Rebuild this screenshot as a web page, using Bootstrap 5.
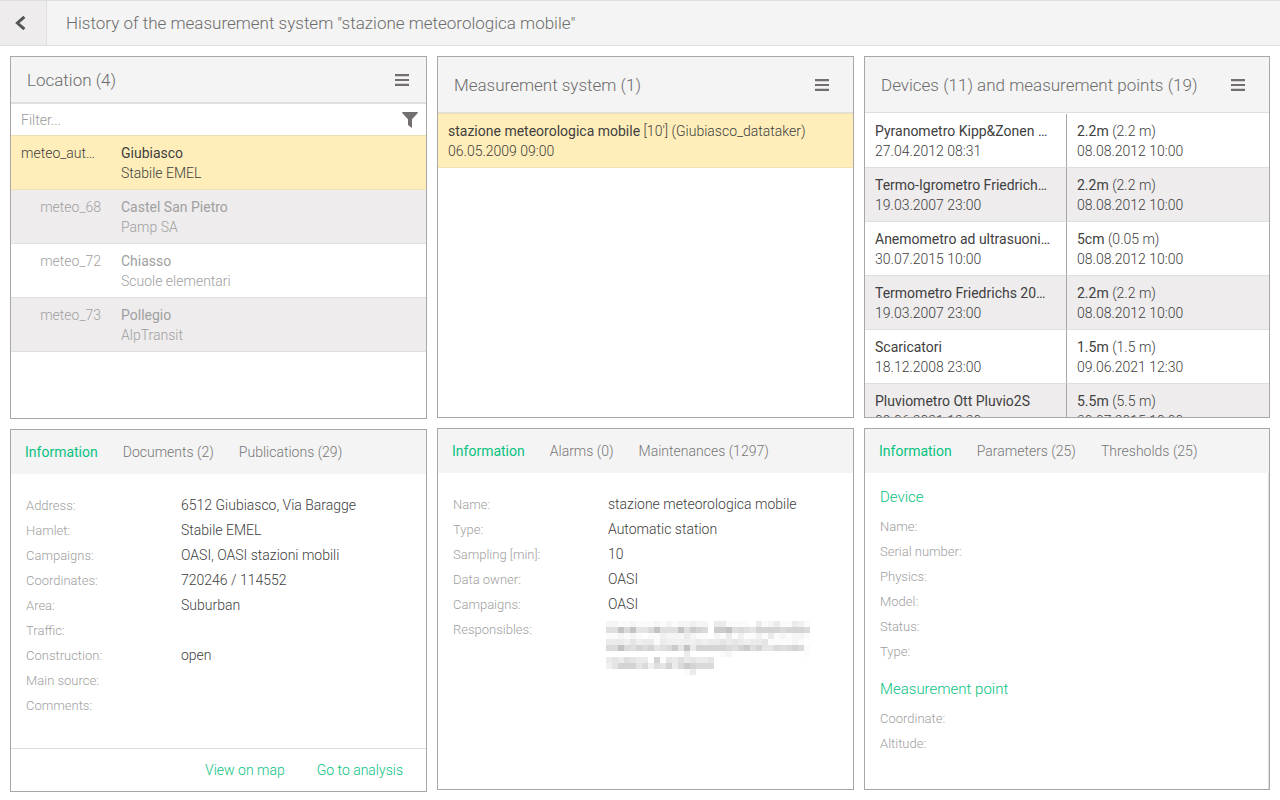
<!DOCTYPE html>
<html lang="en">
<head>
<meta charset="utf-8">
<meta name="viewport" content="width=device-width, initial-scale=1">
<title>History of the measurement system</title>
<link href="https://cdn.jsdelivr.net/npm/bootstrap@5.3.0/dist/css/bootstrap.min.css" rel="stylesheet">
<style>
  :root { --edge: #a9a6a7; --line: #dfdfdf; --bar: #f4f4f4; --stripe: #eeeced; --accent: #08c27f; --ink: #404040; --icon: #736e70; }
  body { font-family: Roboto, "Liberation Sans", sans-serif; font-weight: 300; font-size: 14px; line-height: 20px; color: var(--ink); background: #fff; }
  button, input { font-weight: inherit; }
  .app { height: 100vh; min-height: 640px; }
  .topbar { background: var(--bar); border-block: 1px solid var(--line); height: 46px; }
  .back { width: 47px; border: 0; border-right: 1px solid var(--line); background: var(--stripe); padding: 0 6px 0 0; }
  .title, .panel-head h2 { font-size: 17px; line-height: 24px; font-weight: 300; color: #6c6c6c; margin: 0; }
  .title { padding-left: 19px; }
  .board { display: grid; grid-template-columns: 417fr 417fr 406fr; gap: 10px; padding: 10px 10px 8px; }
  .stack { display: flex; flex-direction: column; gap: 10px; min-height: 0; min-width: 0; }
  .stack + .stack { padding-bottom: 2px; }
  .panel { flex: 1 1 0; min-height: 0; border: 1px solid var(--edge); display: flex; flex-direction: column; overflow: hidden; }
  .panel-head { flex: none; background: var(--bar); border-bottom: 1px solid var(--line); height: 56px; padding: 0 24px 0 16px; }
  .panel-head.compact { height: 46px; padding-right: 17px; }
  .icon-btn { border: 0; background: none; padding: 0; display: flex; color: var(--icon); }
  .filter-row { flex: none; height: 32px; border-top: 1px solid var(--line); padding: 0 8px 0 10px; }
  .filter-row input { border: 0; outline: 0; padding: 0; min-width: 0; background: none; }
  .filter-row input::placeholder { color: #999; opacity: 1; }
  .rows { width: 100%; table-layout: fixed; border-collapse: separate; border-spacing: 0; }
  .rows td { height: 54px; padding: 7px 10px 6px; border-bottom: 1px solid var(--line); vertical-align: top; }
  .rows tr:nth-child(even) td { background: var(--stripe); }
  .rows tr.chosen td { background: #ffeeba; border-bottom-color: #f0e2b4; }
  .first-line { border-top: 1px solid #eee0b4; }
  .first-plain { padding-top: 1px; }
  .rows strong { font-weight: 400; }
  .code-col { width: 100px; }
  .muted-row { color: #a0a0a0; }
  .split td:first-child { border-right: 1px solid var(--edge); }
  .tabs { flex: none; height: 44px; background: var(--bar); padding: 0 14px; gap: 25px; }
  .tabs button { border: 0; background: none; padding: 0; color: #777; }
  .tabs button.active { color: var(--accent); font-weight: 400; }
  .details { display: grid; grid-template-columns: 155px 1fr; margin: 0; }
  .details dt { font-weight: 300; font-size: 13px; line-height: 25px; color: #a0a0a0; }
  .details dd { margin: 0; line-height: 25px; min-height: 25px; }
  .info { flex: 1; padding: 19px 15px 0; }
  .info.sections { padding-top: 14px; border-right: 1px solid var(--line); }
  .info h3 { font-size: 15px; line-height: 20px; font-weight: 300; color: var(--accent); margin: 0 0 7px; }
  .details + h3 { margin-top: 15px; }
  .redacted { display: block; overflow: visible; margin-top: 4px; }
  .panel-foot { flex: none; border-top: 1px solid var(--line); height: 43px; padding: 0 23px; gap: 32px; }
  .panel-foot a { color: var(--accent); text-decoration: none; }
</style>
</head>
<body>
<div class="app d-flex flex-column">
  <header class="topbar d-flex flex-shrink-0">
    <button class="back d-flex align-items-center justify-content-center" type="button" aria-label="Back">
      <svg width="12" height="16" viewBox="0 0 12 16" fill="none" stroke="#555" stroke-width="3"><path d="M10.4 1.8 3.4 8l7 6.2"/></svg>
    </button>
    <h1 class="title align-self-center">History of the measurement system "stazione meteorologica mobile"</h1>
  </header>

  <main class="board flex-grow-1">
    <div class="stack">
      <section class="panel">
        <div class="panel-head compact d-flex align-items-center justify-content-between">
          <h2>Location (4)</h2>
          <button class="icon-btn" type="button" aria-label="Location menu"><svg width="14" height="12" fill="currentColor"><path d="M0 0h14v2.2H0zM0 4.9h14v2.2H0zM0 9.8h14V12H0z"/></svg></button>
        </div>
        <div class="filter-row d-flex align-items-center">
          <input class="flex-grow-1" type="text" placeholder="Filter..." aria-label="Filter locations">
          <button class="icon-btn" type="button" aria-label="Apply filter"><svg width="16" height="16" fill="currentColor"><path d="M.8 0h14.4q1.2.2.4 1.2L10 7.2V16L6 13V7.2L.4 1.2Q-.4.2.8 0z"/></svg></button>
        </div>
        <table class="rows first-line" aria-label="Locations">
          <colgroup><col class="code-col"><col></colgroup>
          <tbody>
            <tr class="chosen"><td>meteo_aut…</td><td><strong>Giubiasco</strong><br>Stabile EMEL</td></tr>
            <tr class="muted-row"><td class="text-end">meteo_68</td><td><strong>Castel San Pietro</strong><br>Pamp SA</td></tr>
            <tr class="muted-row"><td class="text-end">meteo_72</td><td><strong>Chiasso</strong><br>Scuole elementari</td></tr>
            <tr class="muted-row"><td class="text-end">meteo_73</td><td><strong>Pollegio</strong><br>AlpTransit</td></tr>
          </tbody>
        </table>
      </section>
      <section class="panel">
        <div class="tabs d-flex align-items-center" role="tablist">
          <button class="active" type="button" role="tab" aria-selected="true">Information</button>
          <button type="button" role="tab">Documents (2)</button>
          <button type="button" role="tab">Publications (29)</button>
        </div>
        <div class="info">
          <dl class="details">
            <dt>Address:</dt><dd>6512 Giubiasco, Via Baragge</dd>
            <dt>Hamlet:</dt><dd>Stabile EMEL</dd>
            <dt>Campaigns:</dt><dd>OASI, OASI stazioni mobili</dd>
            <dt>Coordinates:</dt><dd>720246 / 114552</dd>
            <dt>Area:</dt><dd>Suburban</dd>
            <dt>Traffic:</dt><dd></dd>
            <dt>Construction:</dt><dd>open</dd>
            <dt>Main source:</dt><dd></dd>
            <dt>Comments:</dt><dd></dd>
          </dl>
        </div>
        <div class="panel-foot d-flex align-items-center justify-content-end">
          <a href="#map">View on map</a>
          <a href="#analysis">Go to analysis</a>
        </div>
      </section>
    </div>

    <div class="stack">
      <section class="panel">
        <div class="panel-head d-flex align-items-center justify-content-between">
          <h2>Measurement system (1)</h2>
          <button class="icon-btn" type="button" aria-label="Measurement system menu"><svg width="14" height="12" fill="currentColor"><path d="M0 0h14v2.2H0zM0 4.9h14v2.2H0zM0 9.8h14V12H0z"/></svg></button>
        </div>
        <table class="rows first-line" aria-label="Measurement systems">
          <tbody>
            <tr class="chosen"><td><strong>stazione meteorologica mobile</strong> [10'] (Giubiasco_datataker)<br>06.05.2009 09:00</td></tr>
          </tbody>
        </table>
      </section>
      <section class="panel">
        <div class="tabs d-flex align-items-center" role="tablist">
          <button class="active" type="button" role="tab" aria-selected="true">Information</button>
          <button type="button" role="tab">Alarms (0)</button>
          <button type="button" role="tab">Maintenances (1297)</button>
        </div>
        <div class="info">
          <dl class="details">
            <dt>Name:</dt><dd>stazione meteorologica mobile</dd>
            <dt>Type:</dt><dd>Automatic station</dd>
            <dt>Sampling [min]:</dt><dd>10</dd>
            <dt>Data owner:</dt><dd>OASI</dd>
            <dt>Campaigns:</dt><dd>OASI</dd>
            <dt>Responsibles:</dt>
            <dd><svg class="redacted" id="redacted" width="202" height="54" viewBox="2 0 202 54" shape-rendering="crispEdges" role="img" aria-label="Redacted names"></svg></dd>
          </dl>
        </div>
      </section>
    </div>

    <div class="stack">
      <section class="panel">
        <div class="panel-head d-flex align-items-center justify-content-between">
          <h2>Devices (11) and measurement points (19)</h2>
          <button class="icon-btn" type="button" aria-label="Devices menu"><svg width="14" height="12" fill="currentColor"><path d="M0 0h14v2.2H0zM0 4.9h14v2.2H0zM0 9.8h14V12H0z"/></svg></button>
        </div>
        <div class="first-plain">
        <table class="rows split" aria-label="Devices and measurement points">
          <tbody>
            <tr><td><div class="text-truncate"><strong>Pyranometro Kipp&amp;Zonen …</strong></div>27.04.2012 08:31</td><td><strong>2.2m</strong> (2.2 m)<br>08.08.2012 10:00</td></tr>
            <tr><td><div class="text-truncate"><strong>Termo-Igrometro Friedrich…</strong></div>19.03.2007 23:00</td><td><strong>2.2m</strong> (2.2 m)<br>08.08.2012 10:00</td></tr>
            <tr><td><div class="text-truncate"><strong>Anemometro ad ultrasuoni…</strong></div>30.07.2015 10:00</td><td><strong>5cm</strong> (0.05 m)<br>08.08.2012 10:00</td></tr>
            <tr><td><div class="text-truncate"><strong>Termometro Friedrichs 20…</strong></div>19.03.2007 23:00</td><td><strong>2.2m</strong> (2.2 m)<br>08.08.2012 10:00</td></tr>
            <tr><td><div class="text-truncate"><strong>Scaricatori</strong></div>18.12.2008 23:00</td><td><strong>1.5m</strong> (1.5 m)<br>09.06.2021 12:30</td></tr>
            <tr><td><div class="text-truncate"><strong>Pluviometro Ott Pluvio2S</strong></div>09.06.2021 12:30</td><td><strong>5.5m</strong> (5.5 m)<br>30.07.2015 10:00</td></tr>
          </tbody>
        </table>
        </div>
      </section>
      <section class="panel">
        <div class="tabs d-flex align-items-center" role="tablist">
          <button class="active" type="button" role="tab" aria-selected="true">Information</button>
          <button type="button" role="tab">Parameters (25)</button>
          <button type="button" role="tab">Thresholds (25)</button>
        </div>
        <div class="info sections">
          <h3>Device</h3>
          <dl class="details">
            <dt>Name:</dt><dd></dd>
            <dt>Serial number:</dt><dd></dd>
            <dt>Physics:</dt><dd></dd>
            <dt>Model:</dt><dd></dd>
            <dt>Status:</dt><dd></dd>
            <dt>Type:</dt><dd></dd>
          </dl>
          <h3>Measurement point</h3>
          <dl class="details">
            <dt>Coordinate:</dt><dd></dd>
            <dt>Altitude:</dt><dd></dd>
          </dl>
        </div>
      </section>
    </div>
  </main>
</div>
<script src="https://cdn.jsdelivr.net/npm/bootstrap@5.3.0/dist/js/bootstrap.bundle.min.js"></script>
<script>
  // Mosaic over the personal names: one digit per 6px cell, higher is darker.
  const mosaic = [
    "2211211121212232204411110412411431",
    "66a7a557a666a6987099a6765888878887",
    "1121210113222421102141311314121221",
    "4443534414333334344545434451111210",
    "77a7687856795a48888876896855767871",
    "0000000000000400000120000000000001",
    "454654408154645445",
    "358885736584798777",
    "00000000000001400"
  ];
  const shades = { 1: "#fbfbfb", 2: "#f5f5f5", 3: "#f0f0f0", 4: "#ebebeb", 5: "#e5e5e5", 6: "#dfdfdf", 7: "#dadada", 8: "#d4d4d4", 9: "#cbcbcb", a: "#c3c3c3" };
  document.getElementById("redacted").innerHTML = mosaic.map((row, y) =>
    [...row].map((c, x) => shades[c] ? `<rect x="${x * 6}" y="${y * 6}" width="6" height="6" fill="${shades[c]}"/>` : "").join("")
  ).join("");
</script>
</body>
</html>
